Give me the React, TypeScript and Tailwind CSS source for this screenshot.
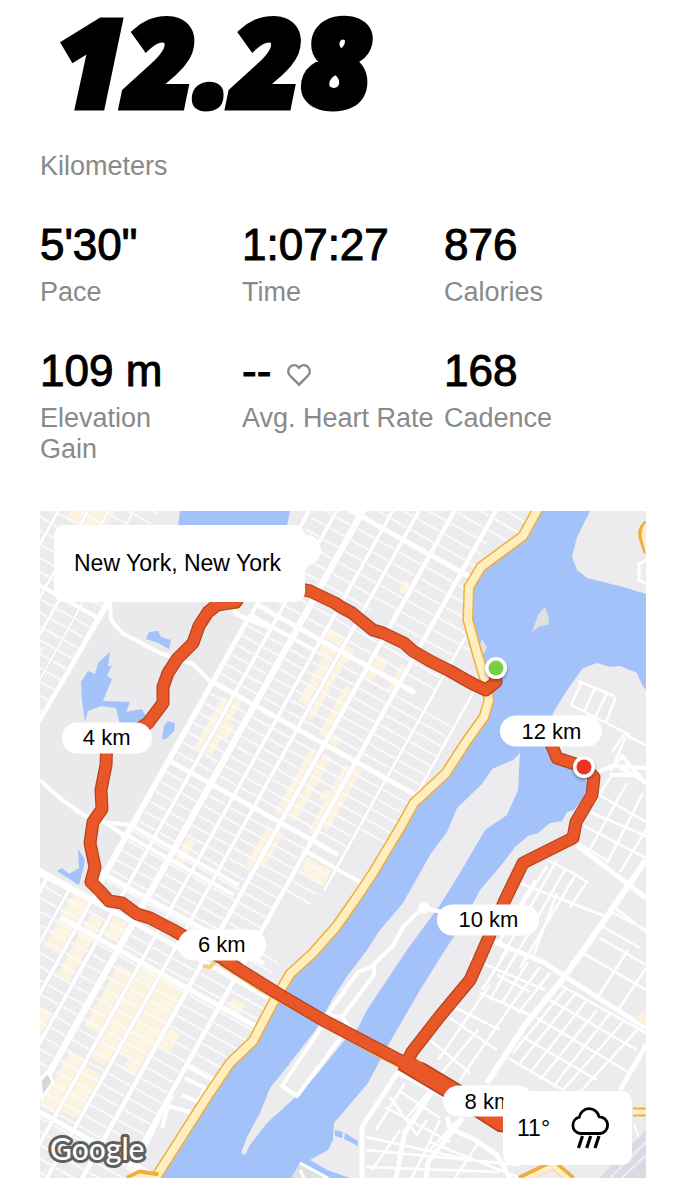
import React from "react";

const SANS = "font-['Liberation_Sans',Arial,sans-serif]";

type Stat = { value: string; label: React.ReactNode; heart?: boolean };

const stats: Stat[] = [
  { value: "5'30\"", label: "Pace" },
  { value: "1:07:27", label: "Time" },
  { value: "876", label: "Calories" },
  {
    value: "109 m",
    label: (
      <>
        Elevation
        <br />
        Gain
      </>
    ),
  },
  { value: "--", label: "Avg. Heart Rate", heart: true },
  { value: "168", label: "Cadence" },
];

function HeartIcon() {
  return (
    <svg viewBox="0 0 24 23" className="ml-1 mt-2 h-6 w-6" fill="none" stroke="#8a8a8a" strokeWidth="2.4" aria-hidden="true">
      <path d="M12 21.2 3 12.2C.7 9.800.7 6 3 3.500 5.200 1.300 8.700 1.100 10.900 3.200L12 4.300l1.100-1.100c2.200-2.100 5.700-1.900 7.900.3 2.300 2.500 2.300 6.300 0 8.700Z" />
    </svg>
  );
}

/* Street grid frame: u runs across the avenues, v runs along them. */
const avenues: [number, number, number, number][] = [
  // u, v start, v end, width
  [300, 300, 1000, 3],
  [326, 300, 1000, 3],
  [344, 300, 1000, 3],
  [366, 300, 1000, 2],
  [387, 440, 760, 5],
  [412, 740, 1100, 3],
  [440, 740, 1100, 4],
  [469, 740, 1100, 4],
  [494, 740, 1100, 3],
  [519, 250, 1100, 4],
  [543, 200, 1100, 4],
  [566, 150, 1100, 7],
  [592, 150, 1100, 4],
  [615, 150, 1100, 4],
  [646, 150, 1100, 5],
  [682, 150, 960, 5],
  [717, 150, 620, 3],
  [751, 150, 560, 3],
];

const crossStreets: [number, number, number, number][] = [
  // v, u start, u end, width
  [275, 517, 780, 5],
  [403, 517, 700, 5],
  [415, 517, 592, 4],
  [492, 517, 760, 5],
  [492, 250, 387, 4],
  [582, 517, 712, 5],
  [595, 680, 745, 4],
  [657, 505, 640, 4],
  [668, 505, 640, 4],
  [713, 505, 700, 5],
  [741, 360, 720, 5],
  [772, 500, 725, 5],
  [840, 680, 730, 4],
  [952, 400, 700, 5],
];

const range = (from: number, to: number, step: number) => {
  const out: number[] = [];
  for (let n = from; n < to; n += step) out.push(n);
  return out;
};

const shops: [number, number, number, number][] = [
  [310, 390, 40, 30],
  [330, 545, 24, 60],
  [590, 388, 22, 11],
  [596, 405, 16, 12],
  [602, 417, 10, 50],
  [617, 395, 10, 16],
  [618, 411, 6, 66],
  [636, 310, 12, 12],
  [636, 430, 9, 56],
  [648, 388, 14, 12],
  [649, 404, 8, 12],
  [649, 478, 8, 10],
  [636, 505, 8, 70],
  [650, 500, 9, 74],
  [674, 384, 8, 30],
  [674, 500, 7, 76],
  [668, 530, 10, 12],
  [684, 496, 7, 70],
  [636, 590, 8, 46],
  [648, 590, 6, 40],
  [686, 599, 28, 18],
  [534, 500, 8, 60],
  [546, 494, 7, 64],
  [553, 520, 6, 16],
  [572, 640, 9, 26],
  [500, 745, 18, 60],
  [525, 755, 14, 70],
  [546, 745, 18, 20],
  [440, 760, 24, 70],
  [574, 785, 16, 70],
  [594, 770, 20, 110],
  [617, 772, 26, 90],
  [628, 856, 14, 18],
  [648, 815, 14, 24],
  [574, 885, 16, 60],
  [594, 890, 18, 50],
  [520, 860, 20, 40],
  [690, 758, 14, 16],
  [470, 850, 20, 30],
];

const queensMinor = [
  // crosses
  "M596 793 646 822M590 812 646 836M584 826 646 858M576 842 610 862M520 883 607 917M547 860 573 873 587 882 570 907M608 910 646 930M600 925 640 948M615 908 646 932",
  "M497 975 530 992M480 993 530 1015M450 1018 497 1050M430 1040 470 1073M523 1037 597 1080M508 1058 563 1090M537 1018 630 1073M550 1000 637 1050M583 953 646 990M600 938 646 965",
  "M560 985 646 1033M440 1000 500 1030M470 958 545 990",
  // alleys
  "M627 783 590 849M643 793 607 863M612 775 587 813M646 830 620 872M625 738 615 762",
  "M557 860 500 960M547 866 497 945M566 868 512 962M576 874 520 968M535 880 505 930M557 893 533 957",
  "M518 950 490 1000M528 962 502 1003M540 967 510 1007M550 973 518 1013M508 950 482 990M490 985 438 1060M515 1000 460 1080M478 1030 440 1075",
  "M567 987 513 1053M577 992 520 1063M587 1000 530 1073M597 1010 540 1080M610 1013 553 1087M623 1022 563 1090M637 1030 580 1092M628 950 596 1000M646 968 618 1010",
  // southern blocks
  "M390 1097 417 1135 427 1120M405 1083 376 1130M430 1090 405 1120M385 1107 450 1142M398 1090 440 1118M366 1137 470 1160M366 1150 520 1165M400 1130 372 1170M440 1120 412 1178M460 1118 430 1150M480 1140 455 1178M366 1167 500 1172M430 1142 520 1178",
  "M578 681 614 696M571 705 630 735M582 681 571 705M595 688 584 712M607 693 595 718M616 697 606 722M625 733 612 752M646 745 625 735",
];

const highway =
  "M540 505 523 536 481 567 469 587 468 620 477 653 486 683 489 700 484 717 466 742 446 773 414 803 400 828 373 873 355 900 336 927 313 953 290 974 273 1003 253 1041 230 1063 207 1097 158 1174 152 1182";

const routeLoop =
  "M495 670 496 682 486 690 473 684 464 679 450 671 430 661 413 651 404 643 383 633 373 630 352 613 341 607 335 603 310 591 250 580 236 602 217 605 208 612 199 626 193 643 177 659 168 673 163 687 163 703 148 723 128 736 107 738 106 765 101 790 102 809 93 822 90 843 95 867 91 882 101 892 109 901 122 903 137 914 150 918 173 930 222 958 240 970 277 993 323 1020 380 1050 407 1064";

const routeReturn =
  "M407 1062 412 1052 440 1016 470 980 482 953 505 900 523 863 573 838 576 822 592 795 594 777 584 767 557 758 550 741";

function RunMap() {
  return (
    <svg viewBox="40 511 606 667" className="block h-auto w-full" role="img" aria-label="Route map">
      <defs>
        <clipPath id="manhattan">
          <path d="M40 511H538L523 536 481 567 469 587 468 620 486 683 486 715 446 773 414 803 373 873 336 927 290 974 253 1041 230 1063 154 1178H40Z" />
        </clipPath>
        <filter id="pinShadow" x="-50%" y="-50%" width="200%" height="200%">
          <feDropShadow dx="0" dy="2" stdDeviation="1.500" floodColor="#334" floodOpacity="0.5" />
        </filter>
      </defs>

      <rect x="40" y="511" width="606" height="667" fill="#ecebee" />

      {/* city blocks */}
      <g clipPath="url(#manhattan)">
        <g transform="matrix(.873 .487 -.487 .873 0 0)">
          {shops.map(([u, v, w, h], i) => (
            <rect key={i} x={u} y={v} width={w} height={h} fill="#fdf4e0" />
          ))}
          <g stroke="#fafafc" strokeWidth="2">
            {range(150, 275, 12.5).map((v) => (
              <path key={v} d={`M525 ${v}H790`} />
            ))}
            {range(275, 400, 12.8).map((v) => (
              <path key={v} d={`M525 ${v}H752`} />
            ))}
            {range(415, 490, 11).map((v) => (
              <path key={v} d={`M519 ${v}H752`} />
            ))}
            {range(492, 580, 11.25).map((v) => (
              <path key={v} d={`M519 ${v}H752`} />
            ))}
            {range(582, 740, 11.25).map((v) => (
              <path key={v} d={`M505 ${v}H712`} />
            ))}
            {range(741, 1100, 12).map((v) => (
              <path key={v} d={`M380 ${v}H${v < 840 ? 725 : 682}`} />
            ))}
            {range(300, 760, 12).map((v) => (
              <path key={v} d={`M240 ${v}H387`} />
            ))}
          </g>
          {/* open plots without side streets */}
          <g fill="#ecebee">
            <rect x="620" y="342" width="24" height="30" />
            <rect x="719" y="345" width="30" height="50" />
            <rect x="690" y="230" width="24" height="30" />
            <rect x="719" y="556" width="40" height="60" />
            <rect x="684" y="640" width="34" height="60" />
            <rect x="684" y="846" width="60" height="160" />
          </g>
          {avenues.map(([u, a, b, w], i) => (
            <g key={i}>
              <path d={`M${u} ${a}V${b}`} stroke="#e2e1e6" strokeWidth={w + 1} />
              <path d={`M${u} ${a}V${b}`} stroke="#fff" strokeWidth={w} />
            </g>
          ))}
          {crossStreets.map(([v, a, b, w], i) => (
            <path key={i} d={`M${a} ${v}H${b}`} stroke="#fff" strokeWidth={w} />
          ))}
        </g>
        {/* park */}
        <path d="M110 600 40 716V868L91 890 213 677 245 622 200 600Z" fill="#eae9ec" />
        <path d="M110 600 111 620 122 633 160 653 177 659 193 664 211 682M40 780 62 800 85 816 104 822 130 825M104 822 128 838" fill="none" stroke="#fff" strokeWidth="4" strokeLinejoin="round" />
        <path d="M250 615 95 890M40 874 110 910M38 723 110 600M225 600 238 615 270 628" fill="none" stroke="#fff" strokeWidth="4.500" />
        <path d="M185 1078 205 1088 198 1102 182 1095M162 1128 168 1106 190 1112M130 1178 163 1110 172 1096" fill="none" stroke="#fff" strokeWidth="4" />
        <path d="M40 1080 48 1072 53 1082 42 1098Z" fill="#d7d6da" stroke="#fff" strokeWidth="3" />
      </g>
      <g fill="#a3c2f9">
        <path d="M180 511H290L287 526H178Z" />
        <path d="M149 632 158 631 161 637 171 640 169 649 158 643 146 639Z" />
        <path d="M110 652 108 667 112 665 107 676 112 679 103 701 130 702 126 712 142 709 147 718 138 725H120L116 708 101 706 88 711 85 722 82 700 81 682 88 671 95 674 98 663Z" />
        <path d="M168 721 175 723 174 731 166 739H162L164 726Z" />
        <path d="M78 849 85 860 83 870 79 885 57 871 62 868 69 874 79 868Z" />
      </g>

      {/* river */}
      <path d="M536 511H590L577 537 572 557 577 570 587 578 623 587 646 594V690L642 685 637 673 620 666 610 667 597 663 583 668 567 690 553 713 548 735 553 757 578 766 588 785 584 797 574 810 567 812 562 821 550 823 538 833 528 836 515 847 503 863 480 890 463 923 445 950 420 990 387 1047 368 1083 334 1123 333 1140 328 1150 310 1160 327 1170 350 1178H150L230 1063 253 1041 290 974 336 927 373 873 414 803 446 773 484 717 489 700 486 683 468 620 469 587 481 567 523 536Z" fill="#a3c2f9" />
      <path d="M300 1163 330 1178H291ZM545 607 549 618 548 625 540 626 532 632 538 615ZM482 639 487 647 484 654 478 648Z" fill="#e0dfe2" />
      <path d="M300 1163 328 1178M304 1178 300 1170" stroke="#fff" strokeWidth="3" />
      <path d="M335 1130 343 1132 342 1138 335 1136ZM345 1133 358 1141 358 1146 344 1139Z" fill="#a3c2f9" />
      <path d="M520 753 513 760 492 769 482 784 457 808 447 832 430 855 403 903 380 930 367 950 348 975 333 998 317 1028 287 1067 270 1088 260 1113 247 1137 241 1153 245 1155 250 1145 267 1123 300 1093 318 1073 343 1042 358 1028 367 1010 407 950 440 905 460 873 485 830 507 815 518 790Z" fill="#ecebee" />
      <path d="M442 912 424 908 416 914 403 927 393 946 374 964 374 975 342 1017 352 1030M374 966 358 972 327 1015 342 1017M321 1028 282 1086 297 1096 345 1032" fill="none" stroke="#fff" strokeWidth="4" strokeLinejoin="round" />
      <circle cx="424" cy="908" r="5.500" fill="#fff" />

      {/* eastern streets */}
      <g fill="none" stroke="#fff">
        {queensMinor.map((d, i) => (
          <path key={i} d={d} strokeWidth="2.500" />
        ))}
        <path d="M646 860 590 941 562 980 525 1025 487 1083" strokeWidth="6" />
        <path d="M577 845 629 885 646 898M495 942 545 963 564 976 646 1028" strokeWidth="5" />
        <path d="M598 772 612 766 646 768M614 764 646 782M610 770 622 756 646 784M610 775 632 775" strokeWidth="4" />
        <path d="M398 1072 362 1127V1178M433 1090 405 1132 396 1178M463 1118 428 1162 426 1178" strokeWidth="5" />
        <path d="M398 1072 445 1097M447 1117 450 1128 475 1140 497 1155 510 1178M646 1045 620 1090" strokeWidth="5" />
        <path d="M646 560 639 564 639 580 646 584" strokeWidth="3" />
        <path d="M634 1125 646 1155" strokeWidth="2" />
      </g>
      <path d="M600 1178 646 1130V1178Z" fill="#d9dbe2" />
      <path d="M610 1178 646 1142M622 1178 646 1155" stroke="#eceef2" strokeWidth="2" />
      <path d="M632 1018 646 1010V1026Z" fill="#fdf3dd" />

      {/* highways */}
      <g fill="none" strokeLinejoin="round">
        <path d={highway} stroke="#efae3c" strokeWidth="11" />
        <path d={highway} stroke="#ffeebf" strokeWidth="8" />
        <path d="M128 1180 140 1174 158 1177M633 1112H648M520 1180 553 1164 572 1180M648 524Q640 530 644 540L648 552" stroke="#efae3c" strokeWidth="9" />
        <path d="M128 1182 140 1176 158 1179M633 1112H648M520 1182 553 1166 572 1182M648 524Q642 531 645 540L648 552" stroke="#ffeebf" strokeWidth="5" />
        <path d="M203 966 210 967 216 961" stroke="#f6cf82" strokeWidth="4" />
        <path d="M220 964 260 990 380 1057 400 1067" stroke="#f3bc55" strokeWidth="3" />
      </g>
      <path d="M229 603 242 602 239 608 231 609Z" fill="#e2e53a" stroke="#9ccb3a" />

      {/* run */}
      <g fill="none" strokeLinejoin="round" strokeLinecap="round">
        <path d={routeReturn} stroke="#b5451f" strokeWidth="13" />
        <path d={routeLoop} stroke="#b5451f" strokeWidth="13" />
        <path d="M400 1055 425 1063 460 1084 540 1135 498 1132 445 1098 398 1070Z" fill="#b5451f" />
        <path d={routeReturn} stroke="#e95628" strokeWidth="10.500" />
        <path d={routeLoop} stroke="#e95628" strokeWidth="10.500" />
        <path d="M400 1057 415 1058 425 1065 460 1086 540 1135 498 1130 445 1096 398 1068Z" fill="#e95628" />
      </g>
      <path d="M478 655 485 680" stroke="#ffeebf" strokeWidth="5" />
      <g filter="url(#pinShadow)">
        <circle cx="496" cy="668" r="11" fill="#fff" />
        <circle cx="584" cy="767" r="11" fill="#fff" />
      </g>
      <circle cx="496" cy="668" r="7.500" fill="#76d042" />
      <circle cx="584" cy="767" r="7.500" fill="#ea3323" />

      <text x="50" y="1160" fontSize="30" strokeWidth="6" stroke="#606062" strokeLinejoin="round" fill="#fff" paintOrder="stroke" className="font-['Lato',sans-serif] font-medium">
        Google
      </text>
    </svg>
  );
}

const PILL =
  "absolute flex h-[31px] -translate-x-1/2 -translate-y-1/2 items-center justify-center whitespace-nowrap rounded-full bg-white text-[22px] leading-none text-black";

export default function App() {
  return (
    <main className={`min-h-screen bg-white px-10 pb-[22px] text-black ${SANS}`}>
      <header className="pl-4">
        <h1 className="font-['Open_Sans',sans-serif] text-[120px] font-extrabold italic leading-[122px] [-webkit-text-stroke:7px_black]">
          12.28
        </h1>
      </header>
      <p className="mt-[29px] text-[27px] leading-[31px] text-[#8a8a8a]">Kilometers</p>

      <dl className="mt-[35px] grid grid-cols-3 gap-y-[35px]">
        {stats.map((s) => (
          <div key={s.value} className="flex flex-col-reverse justify-end whitespace-nowrap">
            <dt className="text-[27px] leading-[31px] text-[#8a8a8a]">{s.label}</dt>
            <dd className="flex h-[60px] items-center gap-3 pb-1 text-[44px] leading-[56px] [-webkit-text-stroke:1px_black]">
              {s.value}
              {s.heart && <HeartIcon />}
            </dd>
          </div>
        ))}
      </dl>

      <section className="relative mt-[46px] overflow-hidden" aria-label="Route">
        <RunMap />
        <span className={`${PILL} left-[11%] top-[34%] w-[90px]`}>4 km</span>
        <span className={`${PILL} left-[30%] top-[65%] w-[88px]`}>6 km</span>
        <span className={`${PILL} left-[74%] top-[61.3%] w-[102px]`}>10 km</span>
        <span className={`${PILL} left-[84.4%] top-[33%] w-[102px]`}>12 km</span>
        <span className={`${PILL} left-[74%] top-[88.5%] w-[90px]`}>8 km</span>
        <span className={`${PILL} left-[39%] top-[5.8%] w-[90px]`} aria-hidden="true" />
        <div className="absolute left-[14px] top-[14px] flex h-[77px] items-center rounded-[10px] bg-white pl-5 pr-6 text-[23px]">
          New York, New York
        </div>
        <div className="absolute bottom-[13px] right-[14px] flex h-[74px] w-[129px] items-center justify-between rounded-[10px] bg-white pl-[14px] pr-[22px]">
          <span className="text-[23px]">11°</span>
          <svg viewBox="0 0 40 42" className="h-[42px] w-10" fill="none" stroke="#000" aria-label="Rain" role="img">
            <path d="M10 26.500A8.300 8.300 0 0 1 9.300 10.200 10 10 0 0 1 29 9.800 8.400 8.400 0 0 1 30.500 26.500Z" strokeWidth="2.800" strokeLinejoin="round" />
            <path d="M12.500 29 8.500 41M20.700 29 16.700 41M29 29 25 41" strokeWidth="3.200" />
          </svg>
        </div>
      </section>
    </main>
  );
}
